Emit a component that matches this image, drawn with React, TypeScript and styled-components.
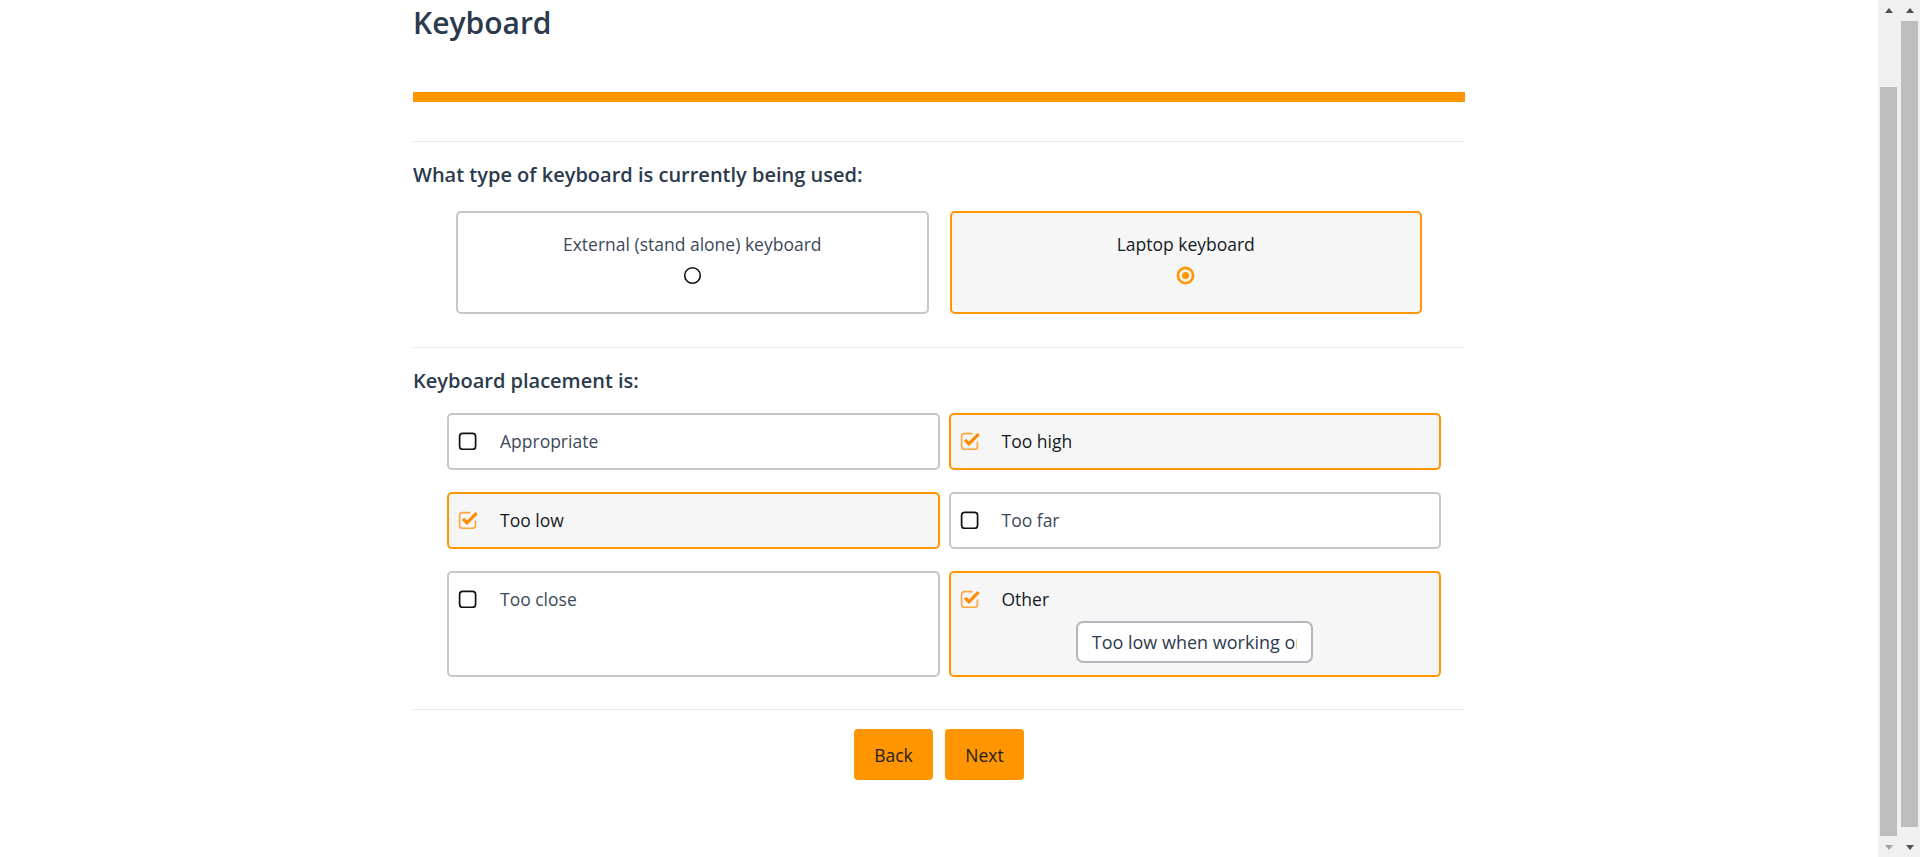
import React from "react";
import styled, { createGlobalStyle, css } from "styled-components";

const ORANGE = "#ff9500";

const GlobalStyle = createGlobalStyle`
  html, body {
    margin: 0;
    overflow: hidden;
  }
  body {
    font-family: "Open Sans", "Noto Sans", sans-serif;
    background: #ffffff;
  }
`;

const Screen = styled.div`
  height: 100vh;
  padding-right: 42px;
  box-sizing: border-box;
`;

const Page = styled.main`
  width: 1052px;
  margin: 0 auto;
  padding: 5px 0 0;
  color: #2d3b4e;
`;

/* browser scrollbars, drawn over the right edge */
const ScrollRail = styled.aside`
  position: fixed;
  top: 0;
  right: 0;
  bottom: 0;
  display: flex;
`;

const ScrollTrack = styled.div`
  width: 21px;
  display: flex;
  flex-direction: column;
  background: #f0f0f0;
`;

const ArrowCell = styled.div`
  height: 20px;
  display: flex;
  align-items: center;
  justify-content: center;
  flex: none;
`;

const Arrow = styled.span<{ $down?: boolean; $dim?: boolean }>`
  width: 0;
  height: 0;
  border-left: 4.5px solid transparent;
  border-right: 4.5px solid transparent;
  ${(p) =>
    p.$down
      ? css`border-top: 5px solid ${p.$dim ? "#a3a3a3" : "#505050"};`
      : css`border-bottom: 5px solid ${p.$dim ? "#a3a3a3" : "#505050"};`}
`;

const ThumbLane = styled.div`
  flex: 1;
  display: flex;
  flex-direction: column;
`;

const Thumb = styled.div<{ $top: number; $bottom: number }>`
  flex: 1;
  margin: ${(p) => p.$top}px 2px ${(p) => p.$bottom}px;
  background: #bdbdbd;
`;

const Title = styled.h1`
  margin: 0;
  font-size: 30px;
  line-height: 36px;
  font-weight: 600;
  color: #2b3a4c;
`;

const AccentBar = styled.div`
  margin-top: 51px;
  height: 10px;
  background: ${ORANGE};
`;

const Divider = styled.hr<{ $gap: number }>`
  margin: ${(p) => p.$gap}px 0 0;
  border: 0;
  height: 1px;
  background: #e8e8e8;
`;

const Question = styled.h2<{ $gap: number }>`
  margin: ${(p) => p.$gap}px 0 0;
  font-size: 20px;
  line-height: 26px;
  font-weight: 600;
  color: #2b3a4c;
`;

const RadioGrid = styled.div`
  margin-top: 23px;
  padding: 0 43px;
  display: grid;
  grid-template-columns: 1fr 1fr;
  gap: 21px;
`;

const selectedCard = css`
  border-color: ${ORANGE};
  background: #f6f6f6;
`;

const RadioCard = styled.label<{ $selected?: boolean }>`
  box-sizing: border-box;
  height: 103px;
  padding: 18px 10px 0;
  display: flex;
  flex-direction: column;
  align-items: center;
  gap: 9px;
  border: 2px solid #c4c8cd;
  border-radius: 5px;
  background: #ffffff;
  cursor: pointer;
  ${(p) => p.$selected && selectedCard}
`;

const OptionText = styled.span<{ $selected?: boolean }>`
  font-size: 17.5px;
  line-height: 26px;
  color: ${(p) => (p.$selected ? "#141a24" : "#3c4a5c")};
`;

const CheckGrid = styled.div`
  margin-top: 19px;
  padding: 0 24px 0 34px;
  display: grid;
  grid-template-columns: 1fr 1fr;
  column-gap: 9px;
  row-gap: 22px;
`;

const CheckCard = styled.div<{ $selected?: boolean }>`
  box-sizing: border-box;
  min-height: 57px;
  padding: 13px 10px 12px 9px;
  display: flex;
  flex-direction: column;
  gap: 9px;
  border: 2px solid #c4c8cd;
  border-radius: 5px;
  background: #ffffff;
  ${(p) => p.$selected && selectedCard}
`;

const CheckRow = styled.label`
  display: flex;
  align-items: center;
  gap: 22px;
  height: 26px;
  cursor: pointer;
`;

const IconBox = styled.span`
  display: flex;
  width: 20px;
  height: 20px;
  margin-top: -3px;
  flex: none;
`;

const OtherInput = styled.input`
  box-sizing: border-box;
  align-self: center;
  width: 237px;
  height: 42px;
  padding: 0 14px;
  border: 2px solid #b2b7bd;
  border-radius: 7px;
  background: #ffffff;
  font-family: "Open Sans", "Noto Sans", sans-serif;
  font-size: 18px;
  color: #2d3b4e;
  outline: none;
`;

const Actions = styled.div`
  margin-top: 19px;
  display: flex;
  justify-content: center;
  gap: 12px;
`;

const ActionButton = styled.button`
  width: 79px;
  height: 51px;
  border: 0;
  border-radius: 4px;
  background: ${ORANGE};
  color: #1f1f1a;
  font-family: "Open Sans", "Noto Sans", sans-serif;
  font-size: 17.5px;
  cursor: pointer;
`;

const RadioIcon = ({ on }: { on: boolean }) => (
  <svg width="19" height="19" viewBox="0 0 19 19">
    {on ? (
      <>
        <circle cx="9.5" cy="9.5" r="7.6" fill="none" stroke={ORANGE} strokeWidth="2.6" />
        <circle cx="9.5" cy="9.5" r="3.6" fill={ORANGE} />
      </>
    ) : (
      <circle cx="9.5" cy="9.5" r="7.8" fill="none" stroke="#111" strokeWidth="1.6" />
    )}
  </svg>
);

const CheckIcon = ({ on }: { on: boolean }) => (
  <IconBox>
    <svg width="20" height="20" viewBox="0 0 20 20">
      {on ? (
        <>
          <path
            d="M12.5 3.6H4.4A2.8 2.8 0 0 0 1.6 6.4v10a2.8 2.8 0 0 0 2.8 2.8h10.2a2.8 2.8 0 0 0 2.8-2.8V11.5"
            fill="none"
            stroke="#ffa53a"
            strokeWidth="1.6"
          />
          <path
            d="M5 9.8l4 4L18.6 4.2"
            fill="none"
            stroke="#ff8a00"
            strokeWidth="3.2"
          />
        </>
      ) : (
        <rect x="1.6" y="3.4" width="16" height="16" rx="3.2" fill="none" stroke="#111" strokeWidth="1.7" />
      )}
    </svg>
  </IconBox>
);

const keyboardTypes = [
  { label: "External (stand alone) keyboard", selected: false },
  { label: "Laptop keyboard", selected: true },
];

const placements = [
  { label: "Appropriate", checked: false },
  { label: "Too high", checked: true },
  { label: "Too low", checked: true },
  { label: "Too far", checked: false },
  { label: "Too close", checked: false },
  { label: "Other", checked: true, other: "Too low when working on the sofa" },
];

const scrollbars = [
  { top: 67, bottom: 1, downDim: true },
  { top: 1, bottom: 10, downDim: false },
];

export default function App() {
  return (
    <>
      <GlobalStyle />
      <Screen>
        <Page>
          <Title>Keyboard</Title>
          <AccentBar />
          <Divider $gap={39} />
          <Question $gap={20}>What type of keyboard is currently being used:</Question>
          <RadioGrid>
            {keyboardTypes.map((t) => (
              <RadioCard key={t.label} $selected={t.selected}>
                <OptionText $selected={t.selected}>{t.label}</OptionText>
                <RadioIcon on={t.selected} />
              </RadioCard>
            ))}
          </RadioGrid>
          <Divider $gap={33} />
          <Question $gap={20}>Keyboard placement is:</Question>
          <CheckGrid>
            {placements.map((p) => (
              <CheckCard key={p.label} $selected={p.checked}>
                <CheckRow>
                  <CheckIcon on={p.checked} />
                  <OptionText $selected={p.checked}>{p.label}</OptionText>
                </CheckRow>
                {p.other && <OtherInput readOnly value={p.other} />}
              </CheckCard>
            ))}
          </CheckGrid>
          <Divider $gap={32} />
          <Actions>
            <ActionButton>Back</ActionButton>
            <ActionButton>Next</ActionButton>
          </Actions>
        </Page>
      </Screen>
      <ScrollRail aria-hidden="true">
        {scrollbars.map((s, i) => (
          <ScrollTrack key={i}>
            <ArrowCell>
              <Arrow />
            </ArrowCell>
            <ThumbLane>
              <Thumb $top={s.top} $bottom={s.bottom} />
            </ThumbLane>
            <ArrowCell>
              <Arrow $down $dim={s.downDim} />
            </ArrowCell>
          </ScrollTrack>
        ))}
      </ScrollRail>
    </>
  );
}
